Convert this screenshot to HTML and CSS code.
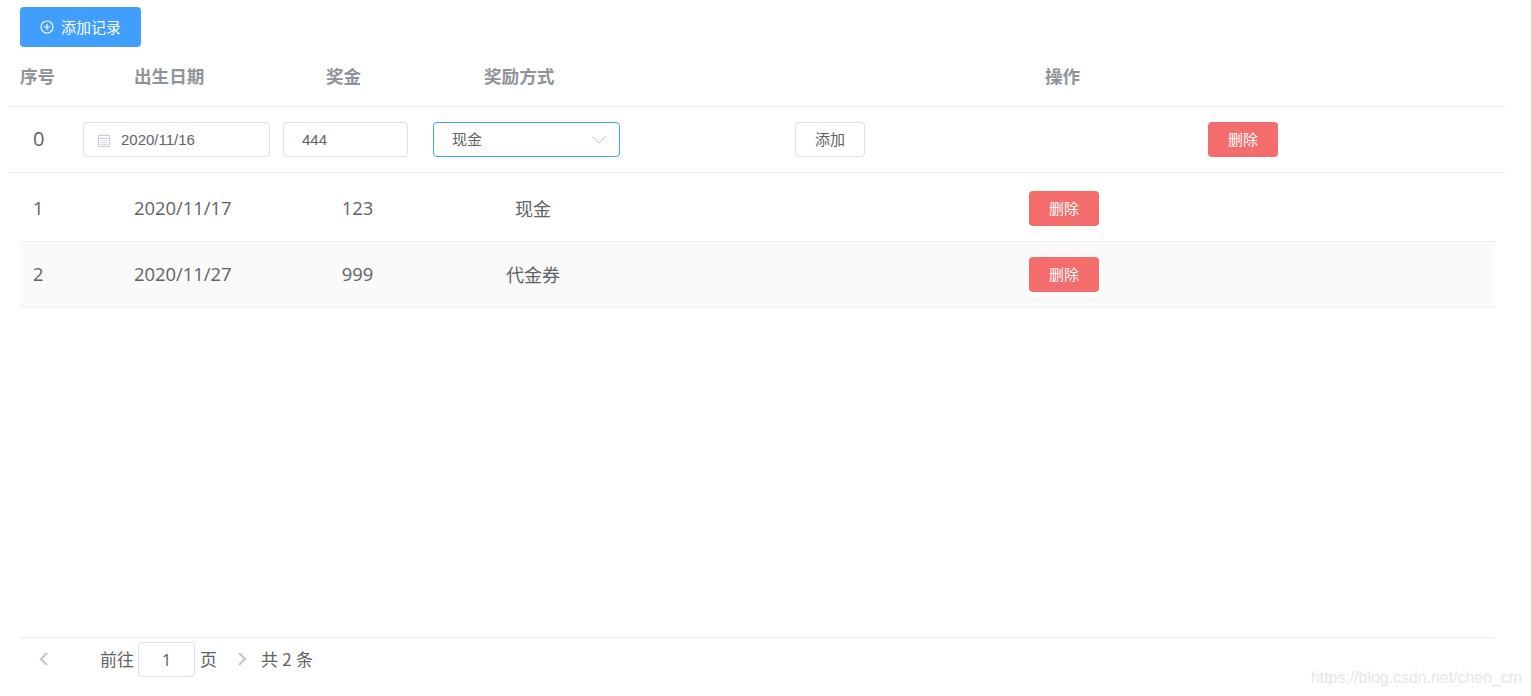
FILE: index.html

```html
<!DOCTYPE html>
<html lang="zh">
<head>
    <meta charset="UTF-8">
    <meta name="viewport" content="width=device-width, initial-scale=1.0">
    <title>添加记录</title>
    <link rel="stylesheet" href="styles.css">
</head>
<body>
    <div class="page">
        <div class="toolbar">
            <button class="btn-primary">
                <svg class="icon-plus" viewBox="0 0 14 14" width="14" height="14">
                    <circle cx="7" cy="7" r="6" fill="none" stroke="#fff" stroke-width="1.1"/>
                    <path d="M7 4v6M4 7h6" fill="none" stroke="#fff" stroke-width="1.1"/>
                </svg>
                <span>添加记录</span>
            </button>
        </div>

        <div class="table-head">
            <div>序号</div>
            <div>出生日期</div>
            <div>奖金</div>
            <div>奖励方式</div>
            <div>操作</div>
        </div>

        <div class="edit-row">
            <div class="index index-big">0</div>
            <div class="field date-field">
                <svg viewBox="0 0 12 14" width="12" height="14">
                    <path d="M0.500 2.500h11v11h-11zM0.500 5.500h11M3 0.500v3M9 0.500v3" fill="none" stroke="#c8cbd3" stroke-width="1"/>
                    <path d="M2.500 7.500h7M2.500 9.500h7M2.500 11.500h7" fill="none" stroke="#c8cbd3" stroke-width="1" stroke-dasharray="1.200 0.600"/>
                </svg>
                <span>2020/11/16</span>
            </div>
            <div class="field money-field">444</div>
            <div class="field select-field">
                <span class="cjk-up">现金</span>
                <svg viewBox="0 0 14 8" width="14" height="8">
                    <path d="M0.500 0.500L7 7L13.500 0.500" fill="none" stroke="#c0c4cc" stroke-width="1"/>
                </svg>
            </div>
            <div><button class="btn btn-plain">添加</button></div>
            <div><button class="btn btn-danger">删除</button></div>
        </div>

        <div class="table-body">
            <div class="row row-first">
                <div class="index">1</div>
                <div class="cell">2020/11/17</div>
                <div class="cell center">123</div>
                <div class="cell cell-cjk center">现金</div>
                <div class="center"><button class="btn btn-danger">删除</button></div>
            </div>
            <div class="row row-stripe">
                <div class="index">2</div>
                <div class="cell">2020/11/27</div>
                <div class="cell center">999</div>
                <div class="cell cell-cjk center">代金券</div>
                <div class="center"><button class="btn btn-danger">删除</button></div>
            </div>
        </div>

        <div class="pager">
            <svg class="arrow-prev" viewBox="0 0 10 14" width="10" height="14">
                <path d="M8 1L2 7l6 6" fill="none" stroke="#c0c4cc" stroke-width="2"/>
            </svg>
            <span class="goto">前往</span>
            <div class="page-input">1</div>
            <span class="page-unit">页</span>
            <svg class="arrow-next" viewBox="0 0 10 14" width="10" height="14">
                <path d="M2 1l6 6-6 6" fill="none" stroke="#c0c4cc" stroke-width="2"/>
            </svg>
            <span class="total">共 2 条</span>
        </div>
    </div>
    <div class="watermark">https://blog.csdn.net/chen_cm</div>
</body>
</html>
```

FILE: styles.css

```css
* {
    box-sizing: border-box;
}
html, body {
    height: 100%;
}
body {
    margin: 0;
    font-family: "Open Sans", "Noto Sans CJK SC", sans-serif;
    color: #606266;
    background-color: #fff;
    overflow: hidden;
}
button {
    font-family: "Noto Sans CJK SC", sans-serif;
    cursor: pointer;
}
.page {
    display: flex;
    flex-direction: column;
    height: 696px;
}
.toolbar {
    padding: 7px 0 0 20px;
}
.btn-primary {
    display: flex;
    align-items: center;
    gap: 7px;
    width: 121px;
    height: 40px;
    padding: 0 0 2px 20px;
    border: none;
    border-radius: 4px;
    background-color: #409eff;
    color: #fff;
    font-size: 15px;
}
.icon-plus {
    margin-top: 2px;
}
.table-head {
    display: grid;
    grid-template-columns: 114px 192px 158px 561px 1fr;
    align-items: center;
    width: 1498px;
    height: 60px;
    margin-left: 8px;
    padding: 0 0 2px 12px;
    border-bottom: 1px solid #ebeef5;
    color: #909399;
    font-family: "Noto Sans CJK SC", sans-serif;
    font-size: 17.600px;
    font-weight: 700;
}
.edit-row {
    display: grid;
    grid-template-columns: 63px 200px 150px 362px 413px 70px;
    align-items: center;
    width: 1498px;
    margin-left: 8px;
    padding: 15px 0 15px 12px;
    border-bottom: 1px solid #ebeef5;
}
.index {
    padding: 0 0 2px 13px;
    font-size: 18.400px;
}
.index-big {
    font-size: 20px;
}
.field {
    display: flex;
    align-items: center;
    height: 35px;
    border: 1px solid #dcdfe6;
    border-radius: 4px;
    font-family: "Liberation Sans", "Noto Sans CJK SC", sans-serif;
    font-size: 15px;
}
.date-field {
    gap: 11px;
    width: 187px;
    padding-left: 14px;
}
.money-field {
    width: 125px;
    padding-left: 18px;
}
.select-field {
    justify-content: space-between;
    width: 187px;
    padding: 0 13px 0 18px;
    border-color: #409eff;
}
.cjk-up {
    padding-bottom: 2px;
}
.btn {
    display: block;
    width: 70px;
    height: 35px;
    padding: 0 0 3px;
    border-radius: 4px;
    font-size: 15px;
}
.btn-plain {
    border: 1px solid #dcdfe6;
    background-color: #fff;
    color: #606266;
}
.btn-danger {
    border: none;
    background-color: #f56c6c;
    color: #fff;
}
.table-body {
    flex: 1;
    padding: 0 0 0 20px;
}
.row {
    display: grid;
    grid-template-columns: 114px 148px 151px 200px 862px;
    align-items: center;
    width: 1475px;
    padding: 15px 0;
    border-bottom: 1px solid #ebeef5;
    font-size: 18.400px;
}
.row-first {
    padding-top: 18px;
}
.row-stripe {
    background-color: #fafafa;
}
.cell {
    padding-bottom: 2px;
}
.cell-cjk {
    font-size: 18px;
}
.center {
    display: flex;
    justify-content: center;
}
.pager {
    display: flex;
    align-items: center;
    width: 1475px;
    height: 59px;
    margin-left: 20px;
    padding: 4px 0 20px;
    border-top: 1px solid #ebeef5;
    font-family: "Noto Sans CJK SC", sans-serif;
    font-size: 17px;
}
.arrow-prev {
    margin-left: 19px;
}
.goto {
    margin-left: 51px;
    padding-bottom: 2px;
}
.page-input {
    display: flex;
    align-items: center;
    justify-content: center;
    width: 57px;
    height: 35px;
    margin-left: 4px;
    border: 1px solid #dcdfe6;
    border-radius: 4px;
    font-family: "Open Sans", sans-serif;
}
.page-unit {
    margin-left: 5px;
    padding-bottom: 2px;
}
.arrow-next {
    margin-left: 20px;
}
.total {
    margin-left: 14px;
    padding-bottom: 2px;
    word-spacing: 0.500px;
}
.watermark {
    position: absolute;
    right: 9px;
    top: 669px;
    color: #e6e6e6;
    font-family: "Liberation Sans", sans-serif;
    font-size: 15.900px;
}
```
